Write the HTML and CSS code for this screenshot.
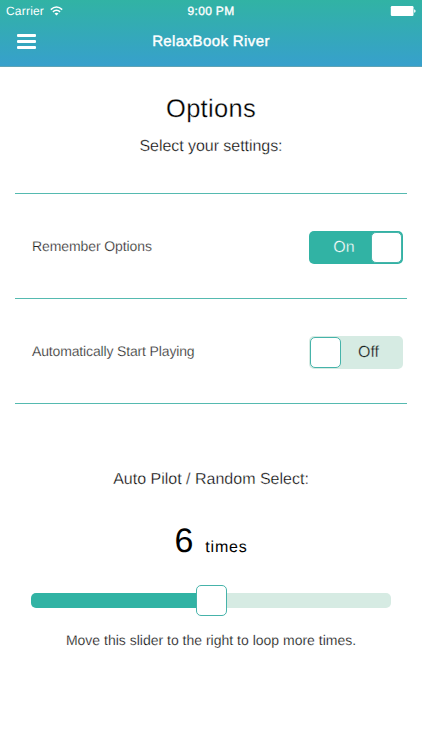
FILE: index.html
```
<!DOCTYPE html>
<html>
	<head>
		<meta charset="utf-8" />
		<title>RelaxBook River</title>
		<link rel="stylesheet" href="styles.css">
	</head>

	<body>
		<div class="header">
			<div class="statusbar">
				<div class="carrier">
					<span>Carrier</span>
					<svg class="wifi" width="13" height="10" viewBox="0 0 13 10">
						<path d="M0.8 3.6 Q6.5 -1.6 12.2 3.6" fill="none" stroke="#fff" stroke-width="1.5" />
						<path d="M2.9 5.9 Q6.5 2.6 10.1 5.9" fill="none" stroke="#fff" stroke-width="1.5" />
						<path d="M4.5 7.5 Q6.5 5.8 8.5 7.5 L6.5 9.6 Z" fill="#fff" />
					</svg>
				</div>
				<div class="clock">9:00 PM</div>
				<svg class="battery" width="26" height="10" viewBox="0 0 26 10">
					<rect x="0.8" y="0" width="22.7" height="10" rx="1.2" fill="#fff" />
					<path d="M24.1 3.2 Q25.6 3.6 25.6 5 Q25.6 6.4 24.1 6.8 Z" fill="#fff" />
				</svg>
			</div>
			<div class="navbar">
				<div class="menu"><i></i><i></i><i></i></div>
				<div class="title">RelaxBook River</div>
				<div class="menu_space"></div>
			</div>
		</div>

		<div class="cont">
			<h1>Options</h1>
			<p class="subtitle">Select your settings:</p>

			<div class="option">
				<label>Remember Options</label>
				<div class="switch switch_on"><span>On</span><b></b></div>
			</div>
			<div class="option option_last">
				<label class="autostart">Automatically Start Playing</label>
				<div class="switch switch_off"><b></b><span>Off</span></div>
			</div>

			<p class="autopilot">Auto Pilot / Random Select:</p>
			<div class="count"><strong>6</strong><span>times</span></div>
			<div class="slider">
				<div class="slider_fill"></div>
				<div class="slider_handle"></div>
				<div class="slider_rest"></div>
			</div>
			<p class="hint">Move this slider to the right to loop more times.</p>
		</div>
	</body>
</html>
```
FILE: styles.css
```
* {
	box-sizing: border-box;
}

body {
	margin: 0;
	background: #fff;
	color: #000;
	font-family: "Liberation Sans", Arial, sans-serif;
	text-rendering: geometricPrecision;
}

.header {
	height: 67px;
	background: linear-gradient(#31b3a4, #37a0cc);
	border-bottom: 1px solid #5ea3b5;
	color: #fff;
}

.statusbar {
	display: grid;
	grid-template-columns: 1fr auto 1fr;
	align-items: center;
	height: 22px;
	padding: 0 6px;
	font-size: 12px;
}

.carrier {
	display: flex;
	align-items: center;
	gap: 6px;
	letter-spacing: 0.2px;
}

.clock {
	font-size: 12px;
	letter-spacing: 0.35px;
	-webkit-text-stroke: 0.35px #fff;
}

.battery {
	justify-self: end;
}

.navbar {
	display: flex;
	align-items: center;
	justify-content: space-between;
	height: 38px;
	padding: 0 17px;
}

.menu,
.menu_space {
	width: 19px;
}

.menu i {
	display: block;
	height: 3px;
	margin-bottom: 3px;
	border-radius: 1px;
	background: #fff;
}

.menu i:last-child {
	margin-bottom: 0;
}

.title {
	font-size: 15px;
	letter-spacing: 0.4px;
	-webkit-text-stroke: 0.4px #fff;
}

.cont {
	padding: 24px 15px 0;
}

h1 {
	margin: 0;
	font-size: 25.5px;
	font-weight: normal;
	line-height: 36px;
	letter-spacing: 0.3px;
	text-align: center;
	-webkit-text-stroke: 0.3px #fff;
}

p {
	margin: 0;
	line-height: 20px;
	text-align: center;
}

.subtitle {
	margin-top: 10px;
	margin-bottom: 36px;
	font-size: 16px;
	letter-spacing: -0.05px;
	color: #000;
	-webkit-text-stroke: 0.3px #fff;
}

.option {
	display: flex;
	justify-content: space-between;
	align-items: flex-start;
	height: 105px;
	padding: 37px 4px 0 17px;
	border-top: 1px solid #55bab0;
}

.option_last {
	height: 106px;
	border-bottom: 1px solid #55bab0;
}

.option label {
	font-size: 14px;
	line-height: 30px;
	letter-spacing: -0.1px;
	color: #222;
	-webkit-text-stroke: 0.25px #fff;
}

.option .autostart {
	letter-spacing: -0.15px;
}

.switch {
	display: flex;
	align-items: center;
	width: 94px;
	height: 33px;
	border-radius: 5px;
	font-size: 16px;
}

.switch span {
	flex: 1;
	text-align: center;
}

.switch b {
	width: 31px;
	height: 31px;
	border-radius: 5px;
	background: #fff;
	border: 1px solid #46b3aa;
}

.switch_on {
	padding-right: 1px;
	background: #31b3a4;
	color: #fff;
}

.switch_on span {
	padding-left: 8px;
	-webkit-text-stroke: 0.3px #31b3a4;
}

.switch_off {
	padding-left: 1px;
	background: #d6ebe3;
	color: #111;
}

.switch_off span {
	padding-right: 7px;
	-webkit-text-stroke: 0.3px #d6ebe3;
}

.autopilot {
	margin-top: 66px;
	font-size: 16px;
	-webkit-text-stroke: 0.3px #fff;
}

.count {
	display: flex;
	justify-content: center;
	align-items: baseline;
	gap: 12px;
	margin-top: 31px;
	line-height: 40px;
}

.count strong {
	font-size: 34px;
	font-weight: normal;
}

.count span {
	font-size: 16px;
	letter-spacing: 0.8px;
}

.slider {
	display: flex;
	align-items: center;
	height: 31px;
	margin: 17px 16px 0;
}

.slider_fill {
	width: 165px;
	height: 15px;
	border-radius: 5px 0 0 5px;
	background: #31b3a4;
}

.slider_handle {
	width: 31px;
	height: 31px;
	border: 1px solid #46b3aa;
	border-radius: 5px;
	background: #fff;
}

.slider_rest {
	flex: 1;
	height: 15px;
	border-radius: 0 5px 5px 0;
	background: #d6ebe3;
}

.hint {
	margin-top: 14px;
	font-size: 14px;
	-webkit-text-stroke: 0.25px #fff;
}
```
